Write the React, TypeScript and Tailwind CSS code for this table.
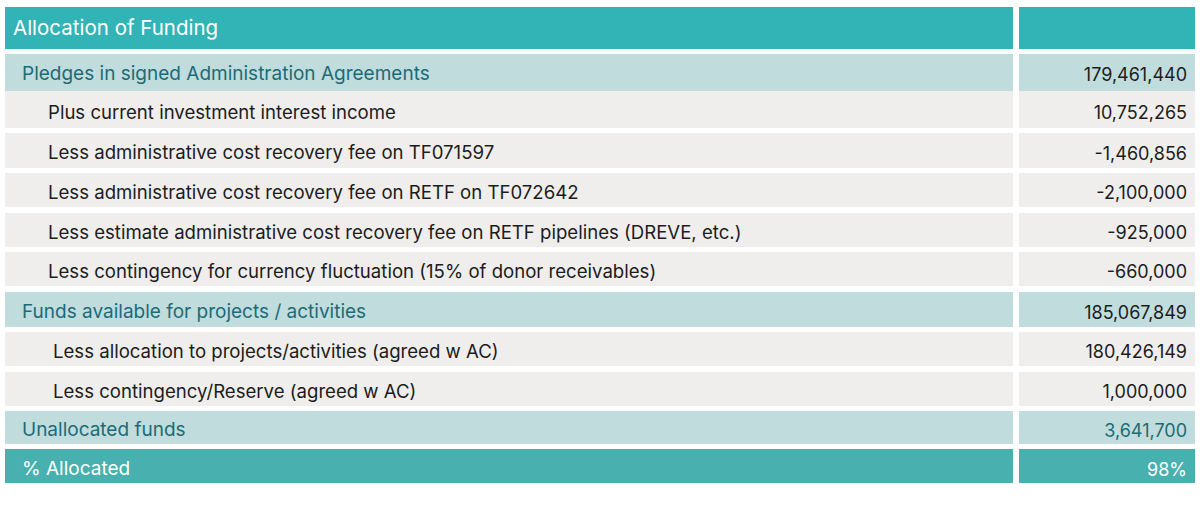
const rows: { label: string; value: string; kind: "group" | "item" | "total" | "pct"; indent?: string; h: string; gap: string; nudge: string }[] = [
  { label: "Pledges in signed Administration Agreements", value: "179,461,440", kind: "group", h: "h-[37px]", gap: "mb-0", nudge: "pt-[3px]" },
  { label: "Plus current investment interest income", value: "10,752,265", kind: "item", indent: "pl-[43px]", h: "h-[37px]", gap: "mb-[5px]", nudge: "pt-[6px]" },
  { label: "Less administrative cost recovery fee on TF071597", value: "-1,460,856", kind: "item", indent: "pl-[43px]", h: "h-[35px]", gap: "mb-[5px]", nudge: "pt-[5px]" },
  { label: "Less administrative cost recovery fee on RETF on TF072642", value: "-2,100,000", kind: "item", indent: "pl-[43px]", h: "h-[34px]", gap: "mb-[6px]", nudge: "pt-[5px]" },
  { label: "Less estimate administrative cost recovery fee on RETF pipelines (DREVE, etc.)", value: "-925,000", kind: "item", indent: "pl-[43px]", h: "h-[34px]", gap: "mb-[5px]", nudge: "pt-[5px]" },
  { label: "Less contingency for currency fluctuation (15% of donor receivables)", value: "-660,000", kind: "item", indent: "pl-[43px]", h: "h-[34px]", gap: "mb-[6px]", nudge: "pt-[5px]" },
  { label: "Funds available for projects / activities", value: "185,067,849", kind: "group", h: "h-[35px]", gap: "mb-[5px]", nudge: "pt-[5px]" },
  { label: "Less allocation to projects/activities (agreed w AC)", value: "180,426,149", kind: "item", indent: "pl-[48px]", h: "h-[34px]", gap: "mb-[6px]", nudge: "pt-[5px]" },
  { label: "Less contingency/Reserve (agreed w AC)", value: "1,000,000", kind: "item", indent: "pl-[48px]", h: "h-[34px]", gap: "mb-[5px]", nudge: "pt-[5px]" },
  { label: "Unallocated funds", value: "3,641,700", kind: "total", h: "h-[33px]", gap: "mb-[5px]", nudge: "pt-[6px]" },
  { label: "% Allocated", value: "98%", kind: "pct", h: "h-[34px]", gap: "mb-0", nudge: "pt-[6px]" },
];

const cellBg = {
  group: "bg-[#c0dcdc]",
  item: "bg-[#efeeec]",
  total: "bg-[#c0dcdc]",
  pct: "bg-[#48b0ae]",
};

export default function App() {
  return (
    <div className="w-[1200px] h-[505px] bg-white pt-[7px] pl-[5px] font-['Inter','Liberation_Sans',sans-serif]">
      <div className="flex flex-col w-[1190px]">
        <div className="flex gap-[6px] h-[42px] mb-[5px]">
          <div className="w-[1008px] bg-[#32b3b5] text-white text-[20.5px] flex items-center pl-[8px]">
            Allocation of Funding
          </div>
          <div className="w-[176px] bg-[#32b3b5]" />
        </div>
        {rows.map((r) => {
          const labelColor =
            r.kind === "pct" ? "text-white" : r.kind === "item" ? "text-[#1c1c1c]" : "text-[#1b6b78]";
          const valueColor =
            r.kind === "pct" ? "text-white" : r.kind === "total" ? "text-[#1b6b78]" : "text-[#1c1c1c]";
          const labelSize = r.kind === "item" ? "text-[18.6px]" : "text-[19px]";
          return (
            <div key={r.label} className={`flex gap-[6px] ${r.h} ${r.gap}`}>
              <div className={`w-[1008px] ${cellBg[r.kind]} ${labelColor} ${labelSize} ${r.nudge} flex items-center ${r.indent ?? "pl-[17px]"}`}>
                {r.label}
              </div>
              <div className={`w-[176px] ${cellBg[r.kind]} ${valueColor} ${r.nudge} text-[18px] flex items-center justify-end pr-[8px]`}>
                {r.value}
              </div>
            </div>
          );
        })}
      </div>
    </div>
  );
}
